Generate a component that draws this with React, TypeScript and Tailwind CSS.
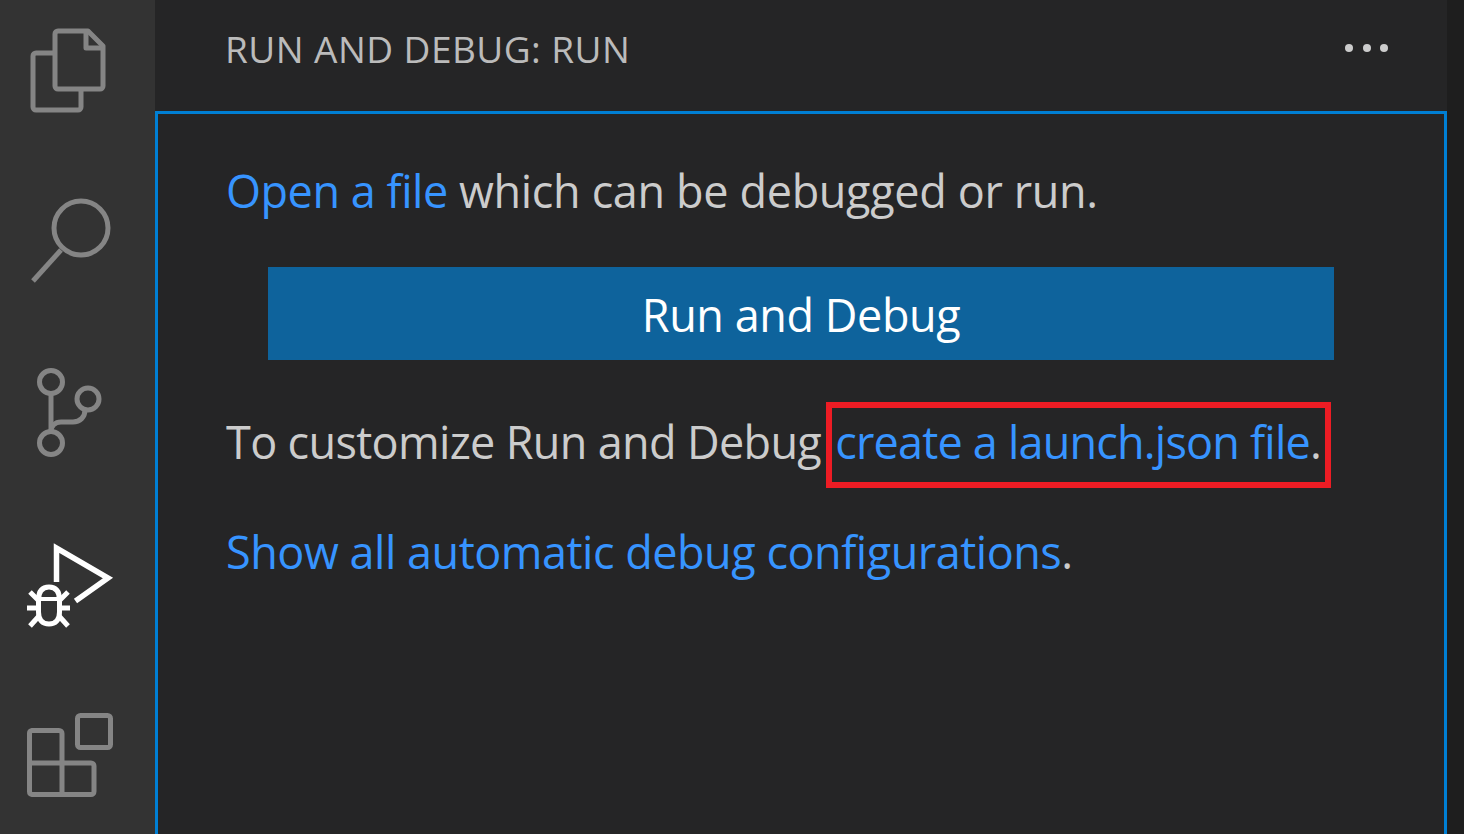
import React from 'react';

const iconGray = '#858585';

function FilesIcon() {
  return (
    <svg width="155" height="100" viewBox="0 21 155 100" fill="none" stroke={iconGray} strokeWidth="5" strokeLinejoin="round">
      <path d="M55 53H36a3 3 0 0 0-3 3v51a3 3 0 0 0 3 3h42a3 3 0 0 0 3-3V90" />
      <path d="M58 31h30l15 15v40a3 3 0 0 1-3 3H58a3 3 0 0 1-3-3V34a3 3 0 0 1 3-3z" />
      <path d="M86 31v17h17" />
    </svg>
  );
}

function SearchIcon() {
  return (
    <svg width="155" height="100" viewBox="0 192 155 100" fill="none" stroke={iconGray} strokeWidth="5">
      <circle cx="81" cy="228" r="27" />
      <path d="M61 250L33 281" />
    </svg>
  );
}

function GitIcon() {
  return (
    <svg width="155" height="100" viewBox="0 363 155 100" fill="none" stroke={iconGray} strokeWidth="5">
      <circle cx="51" cy="382" r="11.5" />
      <circle cx="51" cy="443" r="11.5" />
      <circle cx="88" cy="399" r="11" />
      <path d="M51 394V432" />
      <path d="M51 432c0-6 4-10 10-10h12c7 0 12-5 12-12" />
    </svg>
  );
}

function DebugIcon() {
  return (
    <svg width="155" height="100" viewBox="0 534 155 100" fill="none" stroke="#ffffff" strokeWidth="5.5">
      <path d="M56.500 582V548L108 578L75.500 601" strokeLinejoin="miter" />
      <path d="M38.500 600c0-9 4-13 10.500-13s10.500 4 10.500 13v12c0 8-4 12-10.500 12s-10.500-4-10.500-12z" strokeWidth="5" />
      <path d="M38 599H60" strokeWidth="4" />
      <path d="M27 608H38M60 608H70M30 592L39 601M68 592L59 601M30 626L39 616M68 626L59 616" strokeWidth="5" />
    </svg>
  );
}

function ExtensionsIcon() {
  return (
    <svg width="155" height="100" viewBox="0 705 155 100" fill="none" stroke={iconGray} strokeWidth="5" strokeLinejoin="round">
      <rect x="77.500" y="715.500" width="33" height="32" rx="3" />
      <path d="M32 730.500H59a3 3 0 0 1 3 3V794.500H32a3 3 0 0 1-2.500-3V733.500a3 3 0 0 1 2.500-3z" />
      <path d="M29.500 763H91a3 3 0 0 1 3 3V791.500a3 3 0 0 1-3 3H62" />
    </svg>
  );
}

export default function App() {
  return (
    <div className="flex h-screen w-full overflow-hidden bg-[#1e1e1e] font-['Open_Sans','Liberation_Sans',sans-serif]">
      <div className="flex w-[155px] shrink-0 flex-col gap-[71px] bg-[#333333] pt-[21px]">
        <FilesIcon />
        <SearchIcon />
        <GitIcon />
        <DebugIcon />
        <ExtensionsIcon />
      </div>

      <div className="flex w-[1292px] shrink-0 flex-col bg-[#252526]">
        <div className="flex h-[111px] shrink-0 items-center justify-between pl-[70px] pr-[59px]">
          <span className="pb-[14px] text-[37px] tracking-[0.45px] text-[#bbbbbb]">RUN AND DEBUG: RUN</span>
          <div className="flex gap-[9.500px] pb-[15px]">
            <span className="h-2 w-2 rounded-full bg-[#cccccc]" />
            <span className="h-2 w-2 rounded-full bg-[#cccccc]" />
            <span className="h-2 w-2 rounded-full bg-[#cccccc]" />
          </div>
        </div>

        <div className="flex-1 border-[3px] border-b-0 border-[#007fd4] pl-[68px] pr-[110px] pt-[41px] text-[45px] leading-[72px] text-[#cccccc]">
          <p className="tracking-[-0.35px]">
            <a className="tracking-[-0.47px] text-[#3794ff]">Open a file</a> which can be debugged or run.
          </p>
          <button className="ml-[42px] mt-[40px] flex h-[93px] w-[1066px] items-center justify-center bg-[#0e639c] pt-[3px] tracking-[-0.43px] text-white">
            Run and Debug
          </button>
          <p className="mt-[46px] whitespace-nowrap tracking-[-0.66px]">
            To customize Run and Debug{' '}
            <span className="relative ml-[3px] tracking-[-0.8px]">
              <a className="text-[#3794ff]">create a launch.json file</a>.
              <span className="absolute -bottom-[16px] -left-[9px] -right-[10px] -top-[9px] border-[6px] border-[#ed1c24]" />
            </span>
          </p>
          <p className="mt-[38px] tracking-[-0.48px]">
            <a className="text-[#3794ff]">Show all automatic debug configurations</a>.
          </p>
        </div>
      </div>
    </div>
  );
}
